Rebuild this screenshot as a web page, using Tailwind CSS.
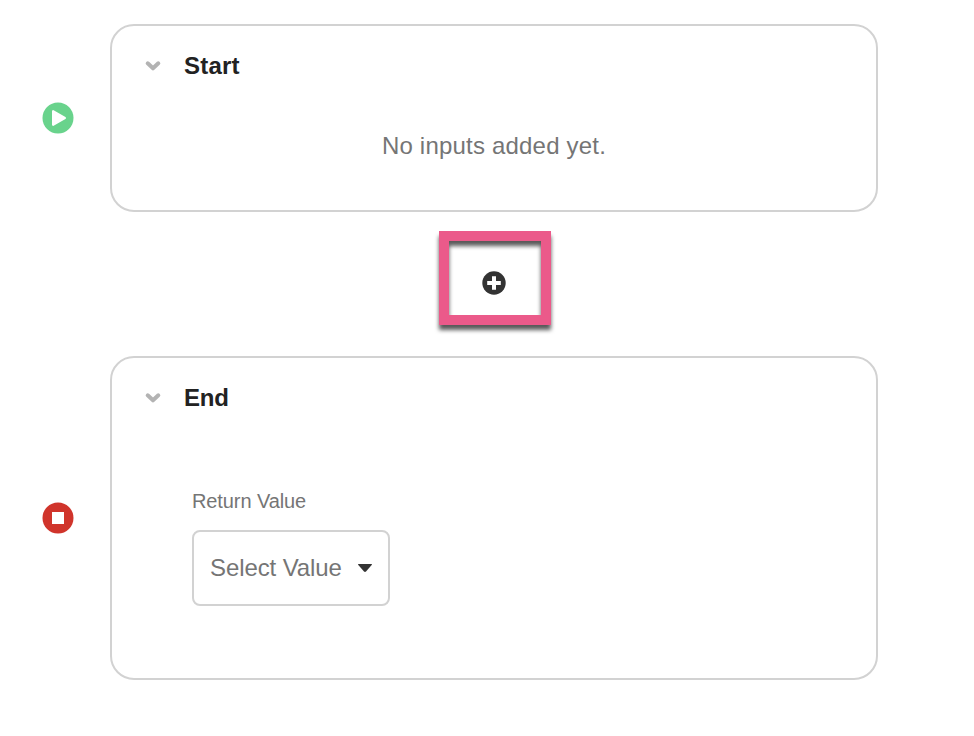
<!DOCTYPE html>
<html lang="en">
<head>
<meta charset="utf-8">
<title>Flow</title>
<script src="https://cdn.jsdelivr.net/npm/@tailwindcss/browser@4"></script>
</head>
<body class="bg-white font-['Liberation_Sans',sans-serif]">
<main class="flex h-[736px] w-[974px] flex-col overflow-hidden pt-6 pl-[42px]">
  <section class="flex items-center gap-9">
    <svg class="size-8 shrink-0" viewBox="0 0 32 32"><circle cx="16" cy="16" r="15.5" fill="#69d38c"/><path d="M11.100 9.200v13.600L22.900 16z" fill="#fff" stroke="#fff" stroke-width="2.200" stroke-linejoin="round"/></svg>
    <div class="h-[188px] w-[768px] rounded-3xl border-2 border-[#d2d2d2] px-8 pt-[26px]">
      <div class="flex h-7 items-center gap-[22px]">
        <svg class="h-5 w-[18px]" viewBox="0 0 18 20" fill="none" stroke="#b3b3b3" stroke-width="4" stroke-linecap="round" stroke-linejoin="round"><path d="M3.700 7.300 9 12.300l5.300-5"/></svg>
        <h2 class="text-2xl/7 font-bold tracking-[0.2px] text-[#222]">Start</h2>
      </div>
      <p class="mt-[50px] text-center text-2xl/8 tracking-[0.2px] text-[#757575]">No inputs added yet.</p>
    </div>
  </section>
  <div class="flex h-36 w-[904px] items-start pt-[19px] pl-[397px]">
    <button class="relative flex h-[94px] w-28 items-center justify-center" aria-label="Add step">
      <span class="absolute inset-0 border-[10px] border-[#eb5a8a] drop-shadow-[0_5px_2px_rgba(0,0,0,0.65)]"></span>
      <svg class="relative mt-[10px] mr-[2px] size-6" viewBox="0 0 24 24"><circle cx="12" cy="12" r="11.7" fill="#333"/><path d="M12 5.200v13.600M5.200 12h13.600" fill="none" stroke="#fff" stroke-width="4" stroke-linecap="butt"/></svg>
    </button>
  </div>
  <section class="flex items-center gap-9">
    <svg class="size-8 shrink-0" viewBox="0 0 32 32"><circle cx="16" cy="16" r="15.5" fill="#d0342b"/><path d="M10 10h12v12H10z" fill="#fff"/></svg>
    <div class="h-[324px] w-[768px] rounded-3xl border-2 border-[#d2d2d2] px-8 pt-[26px]">
      <div class="flex h-7 items-center gap-[22px]">
        <svg class="h-5 w-[18px]" viewBox="0 0 18 20" fill="none" stroke="#b3b3b3" stroke-width="4" stroke-linecap="round" stroke-linejoin="round"><path d="M3.700 7.300 9 12.300l5.300-5"/></svg>
        <h2 class="text-2xl/7 font-bold tracking-[-0.25px] text-[#222]">End</h2>
      </div>
      <div class="mt-[77px] ml-12">
        <label class="block text-xl/6 tracking-[-0.1px] text-[#757575]">Return Value</label>
        <button class="mt-[17px] flex h-[76px] w-[198px] items-center gap-4 rounded-lg border-2 border-[#d2d2d2] pl-4 text-2xl tracking-[-0.1px] text-[#757575]">
          <span class="w-[132px] whitespace-nowrap text-left">Select Value</span>
          <svg class="h-2 w-[14px]" viewBox="0 0 14 8"><path d="M.4 0h13.200q.6.4.1 1L8 7.500q-1 .9-2 0L.3 1q-.5-.6.1-1z" fill="#333"/></svg>
        </button>
      </div>
    </div>
  </section>
</main>
</body>
</html>
